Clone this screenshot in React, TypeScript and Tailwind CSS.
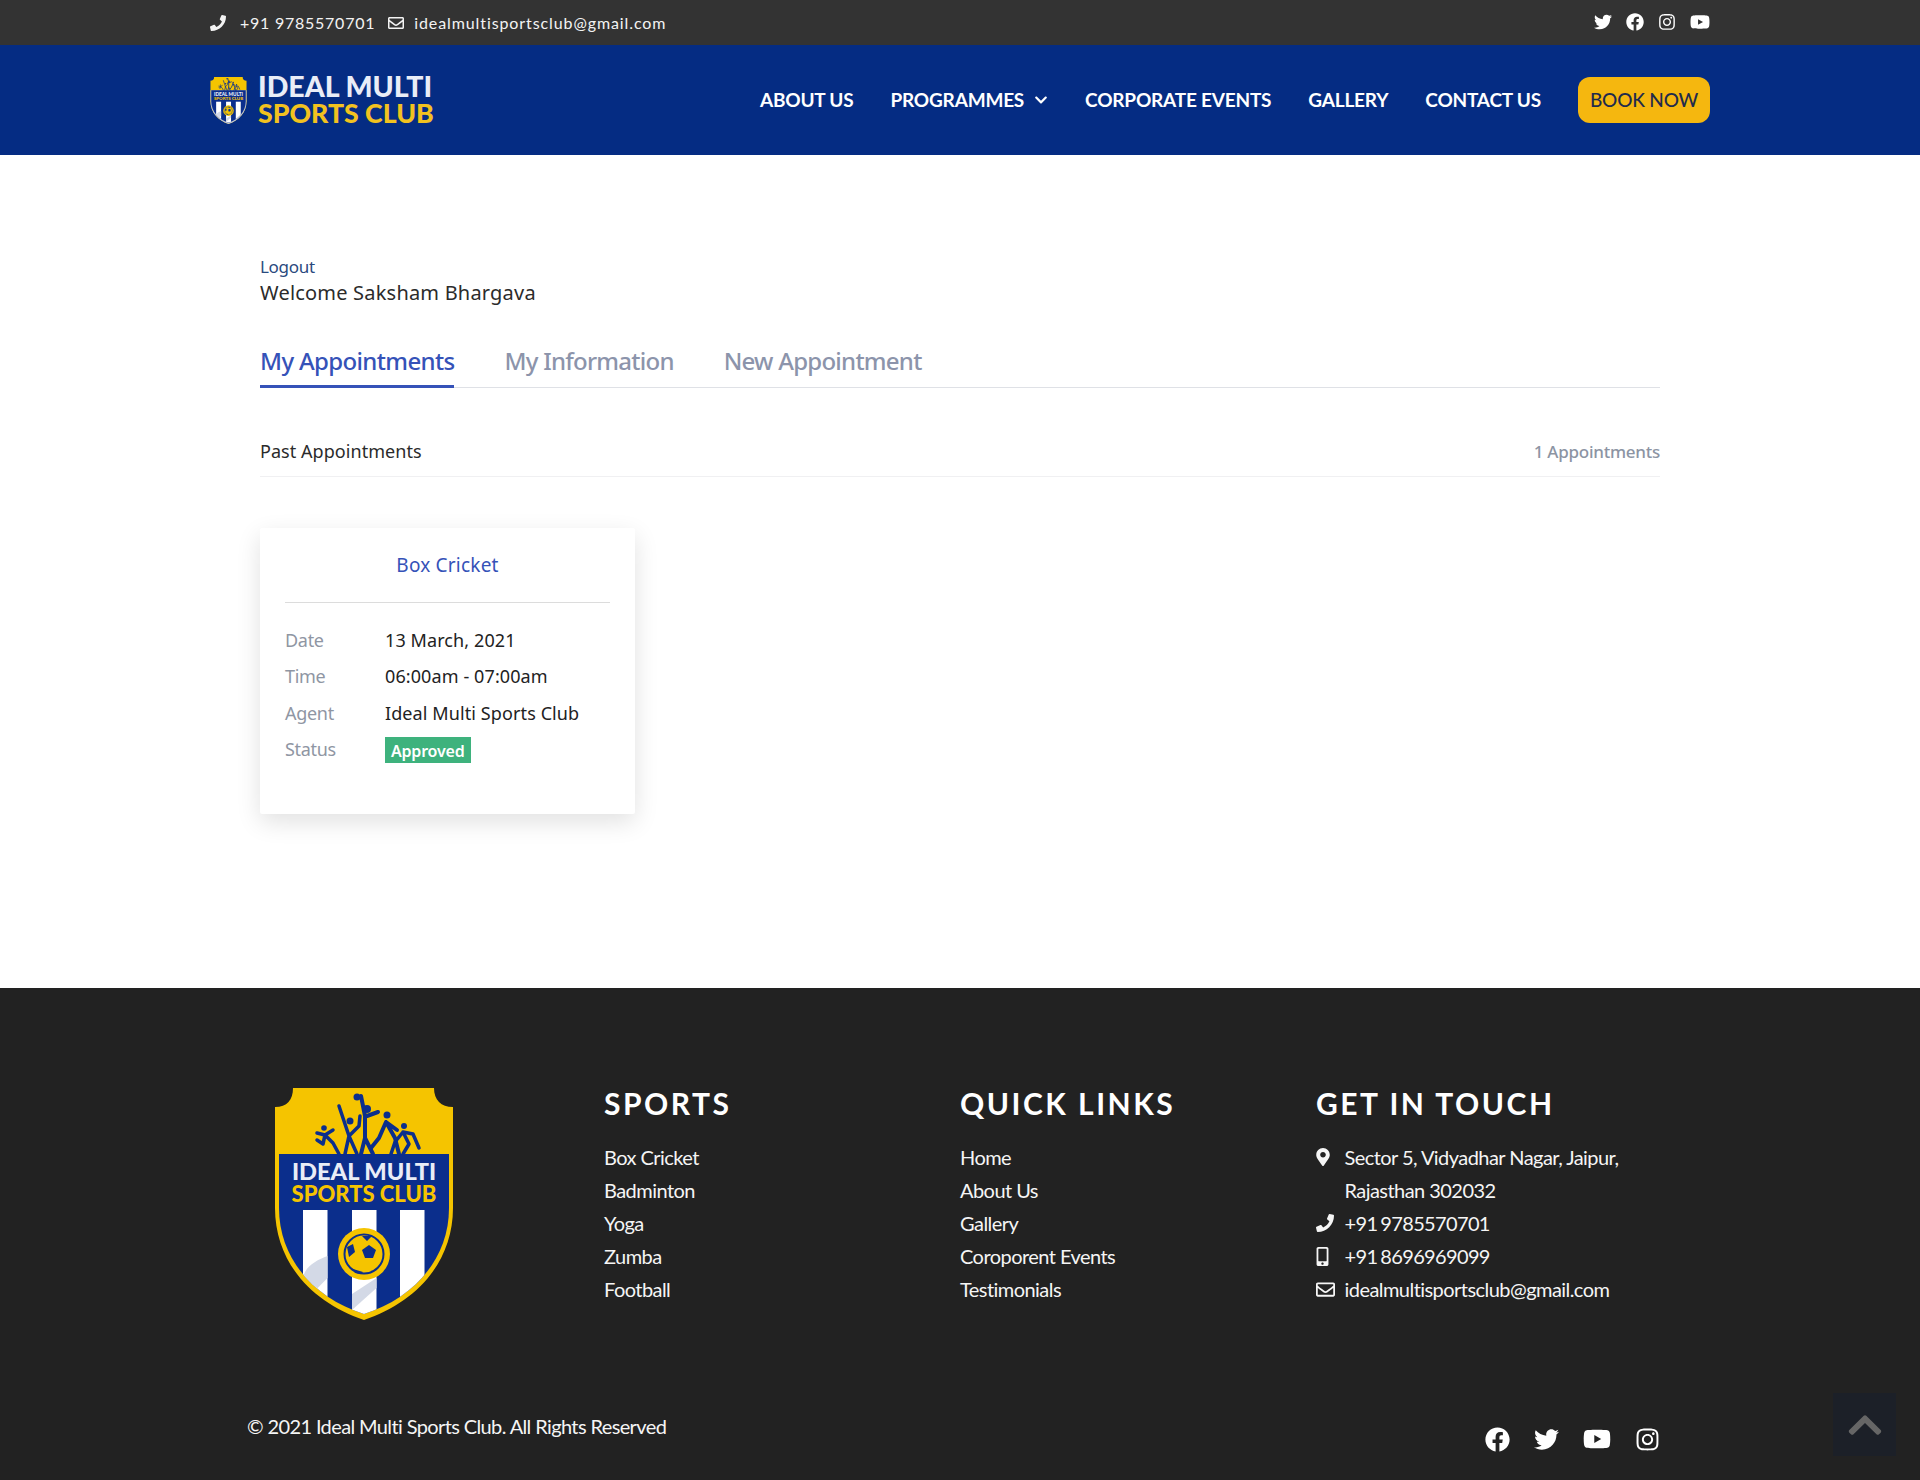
import React from "react";
import { FaPhone, FaRegEnvelope, FaTwitter, FaFacebook, FaInstagram, FaYoutube, FaMapMarkerAlt, FaMobileAlt, FaChevronDown, FaChevronUp } from "react-icons/fa";

function Shield({ className, small }: { className: string; small?: boolean }) {
  const id = small ? "clipS" : "clipL";
  return (
    <svg viewBox="0 0 178 232" className={className}>
      <defs>
        <clipPath id={id}>
          <path d="M4 66H174V120C174 172 137 211 89 226C41 211 4 172 4 120Z" />
        </clipPath>
      </defs>
      <path d="M18 0H159C159 12 166 19 178 19V120C178 175 140 215 89 232C38 215 0 175 0 120V19C12 19 18 12 18 0Z" fill="#f5c400" />
      {small && <path d="M0 66H178V120C178 175 140 215 89 232C38 215 0 175 0 120Z" fill="#b9c2d8" />}
      <path d="M4 66H174V120C174 172 137 211 89 226C41 211 4 172 4 120Z" fill="#0b2e8c" />
      <g clipPath={`url(#${id})`}>
        <rect x="28" y="122" width="24.500" height="110" fill="#fff" />
        <rect x="77" y="122" width="24.500" height="110" fill="#fff" />
        <rect x="125" y="122" width="24.500" height="110" fill="#fff" />
        <path d="M52.500 168V190L28 215V190C30 178 42 172 52.500 168Z" fill="#d3d9e6" />
        <path d="M101.500 190V200L77 222V206Z" fill="#d3d9e6" />
      </g>
      <circle cx="89" cy="166" r="26" fill="#f5c400" />
      <circle cx="89" cy="166" r="19.500" fill="#f5c400" stroke="#0b2e8c" strokeWidth="2" />
      <path d="M89 159L96 164L93 172H85L82 164Z" fill="#0b2e8c" transform="translate(5 -2)" />
      <path d="M72 159L78 156L80 164L74 169ZM87 148L97 148L92 153ZM78 181L88 184L86 186L80 185Z" fill="#0b2e8c" />
      <g fill="#0b2e8c">
        <circle cx="82" cy="9" r="3.500" />
        <circle cx="75" cy="33" r="3.500" />
        <circle cx="92" cy="21" r="4" />
        <circle cx="112" cy="27" r="3.500" />
        <circle cx="129" cy="38" r="3" />
        <circle cx="49" cy="40" r="2.800" />
      </g>
      <g fill="none" stroke="#0b2e8c" strokeWidth="3.500" strokeLinecap="round" strokeLinejoin="round">
        <path d="M42 45L50 47L58 42M50 47L58 55L64 66M50 47L48 56L42 52" />
        <path d="M64 18L74 48L70 66M74 48L84 38L85 28M74 48L82 66" />
        <path d="M90 28L90 50L86 66M90 50L98 66M90 28L86 8M92 28L103 24" strokeWidth="4" />
        <path d="M111 34L104 50L96 60M111 34L120 50L124 66M111 34L122 42" strokeWidth="4" />
        <path d="M128 44L120 54L116 66M128 44L134 56L128 66M128 44L138 46L144 60" />
      </g>
      <text x="89" y="92" textAnchor="middle" fontFamily="Lato, sans-serif" fontWeight="900" fontSize="23.600" fill="#e9edf7">IDEAL MULTI</text>
      <text x="89" y="114" textAnchor="middle" fontFamily="Lato, sans-serif" fontWeight="900" fontSize="22" fill="#f5c400">SPORTS CLUB</text>
    </svg>
  );
}

function App() {
  const label = "text-[18px] leading-[27px] text-[#8f96a3] w-[100px] shrink-0 font-['Noto_Sans',sans-serif] tracking-[-0.3px]";
  const value = "text-[18px] leading-[27px] text-[#222] font-['Noto_Sans',sans-serif] tracking-[0.1px]";
  const heading = "text-[30px] font-bold tracking-[2.5px] text-white leading-[36px] -mt-[3px] mb-[20px]";
  return (
    <div className="w-[1920px] h-[1480px] relative overflow-hidden bg-white font-['Lato',sans-serif]">
      <div className="h-[45px] bg-[#333333] text-white">
        <div className="w-[1500px] mx-auto h-full flex items-center justify-between">
          <div className="flex items-center text-[16px] tracking-[0.9px] text-[#f3f3f3]">
            <FaPhone className="text-[16px] mr-[14px]" />
            <span className="mr-[13px] tracking-[0.75px]">+91 9785570701</span>
            <FaRegEnvelope className="text-[16px] mr-[10px]" />
            <span>idealmultisportsclub@gmail.com</span>
          </div>
          <div className="flex items-center gap-[14px] text-[18px] pb-[1px]">
            <FaTwitter />
            <FaFacebook />
            <FaInstagram />
            <FaYoutube className="text-[20px]" />
          </div>
        </div>
      </div>
      <header className="h-[110px] bg-[#052c83]">
        <div className="w-[1500px] mx-auto h-full flex items-center justify-between">
          <div className="flex items-center gap-[11px]">
            <Shield small className="w-[37px] h-[47px]" />
            <div className="font-black leading-[27px] pb-[1px]">
              <div className="text-[#e9edf7] text-[28.5px]">IDEAL MULTI</div>
              <div className="text-[#f2c21f] text-[26.7px]">SPORTS CLUB</div>
            </div>
          </div>
          <nav className="flex items-center text-white font-bold text-[19px] tracking-[-0.2px]">
            <span className="mr-[37px]">ABOUT US</span>
            <span className="mr-[37px] flex items-center gap-[10px]">PROGRAMMES <FaChevronDown className="text-[14px]" /></span>
            <span className="mr-[37px]">CORPORATE EVENTS</span>
            <span className="mr-[37px]">GALLERY</span>
            <span className="mr-[37px]">CONTACT US</span>
            <span className="w-[132px] h-[46px] flex items-center justify-center rounded-[12px] bg-[#f5b70f] text-[#1f2b4d] font-medium text-[19px] tracking-[-0.2px]">BOOK NOW</span>
          </nav>
        </div>
      </header>
      <main className="h-[833px] px-[260px] pt-[100px] font-['Noto_Sans',sans-serif]">
        <div className="text-[17px] leading-[24px] text-[#2a4a7e] tracking-[-0.3px]">Logout</div>
        <div className="text-[20px] leading-[28px] text-[#2b2b2b] tracking-[0.2px]">Welcome Saksham Bhargava</div>
        <div className="flex gap-[50px] border-b border-[#dfe1e6] mt-[31px] h-[50px] text-[24px] tracking-[-0.75px] leading-[46px] font-medium text-[#8c94ab]">
          <div className="h-[50px] border-b-[3px] border-[#3552b8] text-[#3552b8] tracking-[-0.65px]">My Appointments</div>
          <div>My Information</div>
          <div>New Appointment</div>
        </div>
        <div className="flex justify-between items-center mt-[44px] h-[45px] border-b border-[#f0f0f2] pb-[5px]">
          <span className="text-[18px] text-[#2b2b2b] tracking-[0.05px]">Past Appointments</span>
          <span className="text-[17px] font-medium text-[#8c94a3] tracking-[-0.25px]">1 Appointments</span>
        </div>
        <div className="mt-[51px] w-[375px] h-[286px] bg-white shadow-[0_8px_24px_rgba(0,0,0,0.12)] px-[25px] rounded-[2px]">
          <div className="h-[75px] border-b border-[#dcdcdc] flex items-center justify-center text-[19px] text-[#3552b8] tracking-[0.2px]">Box Cricket</div>
          <div className="flex flex-col gap-[9.4px] mt-[24px]">
            <div className="flex"><span className={label}>Date</span><span className={value}>13 March, 2021</span></div>
            <div className="flex"><span className={label}>Time</span><span className={value}>06:00am - 07:00am</span></div>
            <div className="flex"><span className={label}>Agent</span><span className={value}>Ideal Multi Sports Club</span></div>
            <div className="flex items-center"><span className={label}>Status</span><span className="px-[6px] h-[26px] leading-[28px] bg-[#3eb27d] text-white font-semibold text-[16px] tracking-[-0.2px]">Approved</span></div>
          </div>
        </div>
      </main>
      <footer className="h-[492px] bg-[#222222] text-[#f5f5f5] relative">
        <div className="flex pt-[100px] pl-[275px]">
          <Shield className="w-[178px] h-[232px] shrink-0" />
          <div className="ml-[151px] w-[356px]">
            <h3 className={heading}>SPORTS</h3>
            {["Box Cricket", "Badminton", "Yoga", "Zumba", "Football"].map((t) => (
              <div key={t} className="text-[20px] leading-[33px] tracking-[-0.55px]">{t}</div>
            ))}
          </div>
          <div className="w-[356px]">
            <h3 className={heading}>QUICK LINKS</h3>
            {["Home", "About Us", "Gallery", "Coroporent Events", "Testimonials"].map((t) => (
              <div key={t} className="text-[20px] leading-[33px] tracking-[-0.55px]">{t}</div>
            ))}
          </div>
          <div>
            <h3 className={heading}>GET IN TOUCH</h3>
            <div className="text-[20px] leading-[33px] tracking-[-0.55px]">
              <div className="flex"><span className="w-[28.5px] pt-[7px]"><FaMapMarkerAlt className="text-[18px] -ml-[2px]" /></span><span>Sector 5, Vidyadhar Nagar, Jaipur,<br />Rajasthan 302032</span></div>
              <div className="flex"><span className="w-[28.5px] pt-[7px]"><FaPhone className="text-[18px]" /></span><span className="tracking-[-0.65px] [word-spacing:-1.5px]">+91 9785570701</span></div>
              <div className="flex"><span className="w-[28.5px] pt-[7px]"><FaMobileAlt className="text-[19px] -ml-[3px]" /></span><span className="tracking-[-0.65px] [word-spacing:-1.5px]">+91 8696969099</span></div>
              <div className="flex"><span className="w-[28.5px] pt-[7px]"><FaRegEnvelope className="text-[19px]" /></span><span>idealmultisportsclub@gmail.com</span></div>
            </div>
          </div>
        </div>
        <div className="flex justify-between items-start pl-[247px] pr-[260px] mt-[91px]">
          <span className="text-[20px] leading-[30px] tracking-[-0.62px]">© 2021 Ideal Multi Sports Club. All Rights Reserved</span>
          <div className="flex items-center gap-[24px] text-[25px] text-white pt-[14px]">
            <FaFacebook />
            <FaTwitter />
            <FaYoutube className="text-[28px]" />
            <FaInstagram />
          </div>
        </div>
        <div className="absolute left-[1833px] top-[405px] w-[63px] h-[63px] bg-[#1c2028] flex items-center justify-center text-[#666]">
          <FaChevronUp className="text-[38px]" />
        </div>
      </footer>
    </div>
  );
}

export default App;
